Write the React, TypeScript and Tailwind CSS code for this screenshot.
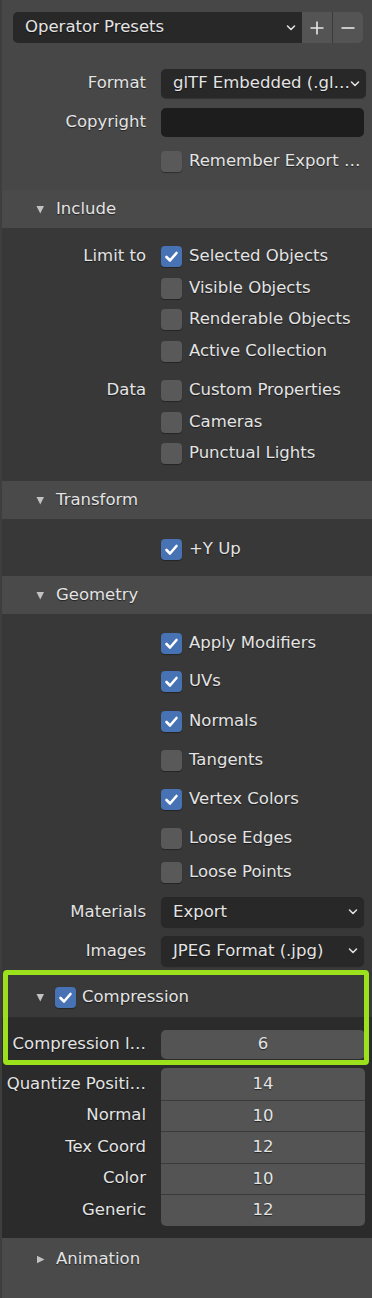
import React from "react";

const txt = "text-[#e4e4e4] [text-shadow:0_1px_1px_rgba(0,0,0,0.55)]";

function Checkbox({ checked }: { checked?: boolean }) {
  return (
    <div
      className={`w-[21px] h-[21px] rounded-[4px] shrink-0 flex items-center justify-center ${
        checked ? "bg-[#4772b3]" : "bg-[#595959]"
      } shadow-[0_1px_1px_rgba(0,0,0,0.35)]`}
    >
      {checked && (
        <svg width="21" height="21" viewBox="0 0 21 21">
          <path d="M5.5 11 L9 14.5 L15.5 7" fill="none" stroke="#ffffff" strokeWidth="2.6" strokeLinecap="round" strokeLinejoin="round" />
        </svg>
      )}
    </div>
  );
}

function Chevron() {
  return (
    <svg width="10" height="8" viewBox="0 0 10 8" className="shrink-0">
      <path d="M1.5 2 L5 5.5 L8.5 2" fill="none" stroke="#e0e0e0" strokeWidth="1.6" strokeLinecap="round" strokeLinejoin="round" />
    </svg>
  );
}

function TriDown() {
  return (
    <svg width="9" height="9" viewBox="0 0 9 9" className="shrink-0">
      <path d="M0.5 1 L8 1 L4.25 8.5 Z" fill="#c2c2c2" />
    </svg>
  );
}

function TriRight() {
  return (
    <svg width="9" height="9" viewBox="0 0 9 9" className="shrink-0">
      <path d="M1 0.75 L8.5 4.5 L1 8.25 Z" fill="#c2c2c2" />
    </svg>
  );
}

function Label({ children }: { children?: React.ReactNode }) {
  return <div className={`w-[144px] shrink-0 text-right whitespace-nowrap ${txt}`}>{children}</div>;
}

function CheckRow({ label, text, checked, mt }: { label?: string; text: string; checked?: boolean; mt: string }) {
  return (
    <div className={`flex items-center h-[22px] ${mt}`}>
      <Label>{label}</Label>
      <div className="ml-[15px] flex items-center gap-[7px]">
        <Checkbox checked={checked} />
        <span className={`whitespace-nowrap ${txt}`}>{text}</span>
      </div>
    </div>
  );
}

function Dropdown({ label, value, mt, h = "h-[30px]" }: { label: string; value: string; mt: string; h?: string }) {
  return (
    <div className={`flex items-center ${h} ${mt}`}>
      <Label>{label}</Label>
      <div className={`ml-[15px] mr-[8px] flex-1 h-full bg-[#282828] rounded-[5px] flex items-center pl-[12px] pr-[6px] shadow-[0_1px_1px_rgba(0,0,0,0.3)]`}>
        <span className={`flex-1 whitespace-nowrap ${txt}`}>{value}</span>
        <Chevron />
      </div>
    </div>
  );
}

function Header({ title, open = true, h = "h-[38px]" }: { title: string; open?: boolean; h?: string }) {
  return (
    <div className={`${h} bg-[#4a4a4a] flex items-center pl-[34px] gap-[11px]`}>
      {open ? <TriDown /> : <TriRight />}
      <span className={txt}>{title}</span>
    </div>
  );
}

export default function App() {
  const nums: [string, string, string][] = [
    ["Quantize Positi…", "14", "h-[32px]"],
    ["Normal", "10", "h-[31px]"],
    ["Tex Coord", "12", "h-[32px]"],
    ["Color", "10", "h-[31px]"],
    ["Generic", "12", "h-[32px]"],
  ];
  return (
    <div className="w-[372px] h-[1298px] bg-[#3e3e3e] pl-[2px] font-['DejaVu_Sans',sans-serif] text-[16.5px] leading-none overflow-hidden">
      <div className="relative flex flex-col h-full">
        {/* top region */}
        <div className="bg-[#474747] h-[190px] flex flex-col pt-[12px]">
          <div className="flex h-[31px] ml-[11px] mr-[9px]">
            <div className="flex-1 bg-[#282828] rounded-l-[5px] flex items-center pl-[12px] pr-[6px]">
              <span className={`flex-1 ${txt}`}>Operator Presets</span>
              <Chevron />
            </div>
            <div className="w-[31px] bg-[#545454] flex items-center justify-center border-r border-[#3a3a3a]">
              <svg width="14" height="14" viewBox="0 0 14 14">
                <path d="M7 0.5 V13.5 M0.5 7 H13.5" stroke="#e6e6e6" strokeWidth="1.6" />
              </svg>
            </div>
            <div className="w-[30px] bg-[#545454] rounded-r-[5px] flex items-center justify-center">
              <svg width="14" height="14" viewBox="0 0 14 14">
                <path d="M0.5 7 H13.5" stroke="#e6e6e6" strokeWidth="1.6" />
              </svg>
            </div>
          </div>
          <Dropdown label="Format" value="glTF Embedded (.gl…" mt="mt-[26px]" h="h-[29px]" />
          <div className="flex items-center h-[29px] mt-[10px]">
            <Label>Copyright</Label>
            <div className="ml-[15px] mr-[8px] flex-1 h-full bg-[#1d1d1d] rounded-[5px]" />
          </div>
          <CheckRow text="Remember Export …" mt="mt-[13px]" />
        </div>

        {/* Include */}
        <Header title="Include" />
        <div className="bg-[#383838] h-[253px] flex flex-col">
          <CheckRow label="Limit to" text="Selected Objects" checked mt="mt-[17px]" />
          <CheckRow text="Visible Objects" mt="mt-[10px]" />
          <CheckRow text="Renderable Objects" mt="mt-[9px]" />
          <CheckRow text="Active Collection" mt="mt-[10px]" />
          <CheckRow label="Data" text="Custom Properties" mt="mt-[17px]" />
          <CheckRow text="Cameras" mt="mt-[10px]" />
          <CheckRow text="Punctual Lights" mt="mt-[9px]" />
        </div>

        {/* Transform */}
        <Header title="Transform" />
        <div className="bg-[#383838] h-[57px] flex flex-col">
          <CheckRow text="+Y Up" checked mt="mt-[19px]" />
        </div>

        {/* Geometry */}
        <Header title="Geometry" />
        <div className="bg-[#383838] h-[363px] flex flex-col">
          <CheckRow text="Apply Modifiers" checked mt="mt-[18px]" />
          <CheckRow text="UVs" checked mt="mt-[16px]" />
          <CheckRow text="Normals" checked mt="mt-[18px]" />
          <CheckRow text="Tangents" mt="mt-[17px]" />
          <CheckRow text="Vertex Colors" checked mt="mt-[17px]" />
          <CheckRow text="Loose Edges" mt="mt-[17px]" />
          <CheckRow text="Loose Points" mt="mt-[12px]" />
          <Dropdown label="Materials" value="Export" mt="mt-[14px]" />
          <Dropdown label="Images" value="JPEG Format (.jpg)" mt="mt-[9px]" h="h-[30px]" />
        </div>

        {/* Compression subpanel */}
        <div className="h-[40px] bg-[#393939] flex items-center pl-[34px]">
          <TriDown />
          <div className="ml-[10px]">
            <Checkbox checked />
          </div>
          <span className={`ml-[6px] ${txt}`}>Compression</span>
        </div>
        <div className="bg-[#2b2b2b] h-[221px] flex flex-col">
          <div className="flex items-center h-[29px] mt-[13px]">
            <Label>Compression l…</Label>
            <div className={`ml-[15px] mr-[7px] flex-1 h-full bg-[#545454] rounded-[5px] flex items-center justify-center ${txt}`}>6</div>
          </div>
          <div className="flex mt-[9px]">
            <div className="flex flex-col">
              {nums.map(([l, , h]) => (
                <div key={l} className={`${h} flex items-center`}>
                  <Label>{l}</Label>
                </div>
              ))}
            </div>
            <div className="ml-[15px] mr-[7px] flex-1 flex flex-col rounded-[5px] overflow-hidden bg-[#545454]">
              {nums.map(([l, v, h], i) => (
                <div
                  key={l}
                  className={`${h} flex items-center justify-center ${i > 0 ? "border-t border-[#3a3a3a]" : ""} ${txt}`}
                >
                  {v}
                </div>
              ))}
            </div>
          </div>
        </div>

        {/* Animation */}
        <div className="flex-1 bg-[#4a4a4a] flex flex-col">
          <Header title="Animation" open={false} h="h-[42px]" />
        </div>

        {/* green highlight annotation */}
        <div className="absolute left-[1px] top-[970px] w-[366px] h-[95px] border-[5px] border-[#9be21c] rounded-[4px] pointer-events-none" />
      </div>
    </div>
  );
}
